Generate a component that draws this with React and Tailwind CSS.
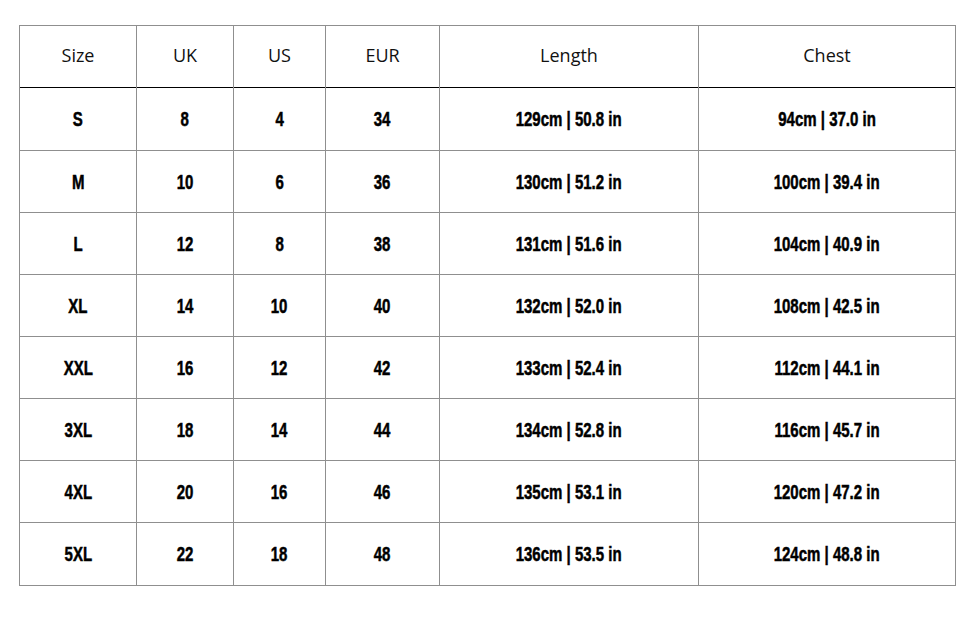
import React from "react";

const rows = [
  ["S", "8", "4", "34", "129cm | 50.8 in", "94cm | 37.0 in"],
  ["M", "10", "6", "36", "130cm | 51.2 in", "100cm | 39.4 in"],
  ["L", "12", "8", "38", "131cm | 51.6 in", "104cm | 40.9 in"],
  ["XL", "14", "10", "40", "132cm | 52.0 in", "108cm | 42.5 in"],
  ["XXL", "16", "12", "42", "133cm | 52.4 in", "112cm | 44.1 in"],
  ["3XL", "18", "14", "44", "134cm | 52.8 in", "116cm | 45.7 in"],
  ["4XL", "20", "16", "46", "135cm | 53.1 in", "120cm | 47.2 in"],
  ["5XL", "22", "18", "48", "136cm | 53.5 in", "124cm | 48.8 in"],
];

const heads = ["Size", "UK", "US", "EUR", "Length", "Chest"];
const widths = ["w-[117px]", "w-[97px]", "w-[92px]", "w-[114px]", "w-[259px]", "w-[257px]"];

export default function App() {
  return (
    <div className="w-[971px] h-[617px] bg-white pt-[25px] pl-[19px]">
      <table className="border-collapse table-fixed w-[937px] border border-[#8f8f8f]">
        <colgroup>
          {widths.map((w, i) => (
            <col key={i} className={w} />
          ))}
        </colgroup>
        <thead>
          <tr className="h-[62px] border-b border-b-black">
            {heads.map((h, i) => (
              <th
                key={i}
                className="border-x border-[#8f8f8f] font-normal text-[18px] leading-none text-[#111] text-center align-middle p-0 pb-[4px] font-['Open_Sans',sans-serif]"
              >
                {h}
              </th>
            ))}
          </tr>
        </thead>
        <tbody>
          {rows.map((r, ri) => (
            <tr
              key={ri}
              className={`border-t border-[#8f8f8f] ${ri === 0 || ri === rows.length - 1 ? "h-[63px]" : "h-[62px]"}`}
            >
              {r.map((c, ci) => (
                <td
                  key={ci}
                  className="border-x border-[#8f8f8f] text-center align-middle p-0 pt-[2px]"
                >
                  <span className="inline-block scale-x-[0.75] whitespace-nowrap text-[20px] leading-none font-bold text-black [-webkit-text-stroke:0.5px_black] font-['Liberation_Sans',sans-serif]">
                    {c}
                  </span>
                </td>
              ))}
            </tr>
          ))}
        </tbody>
      </table>
    </div>
  );
}
